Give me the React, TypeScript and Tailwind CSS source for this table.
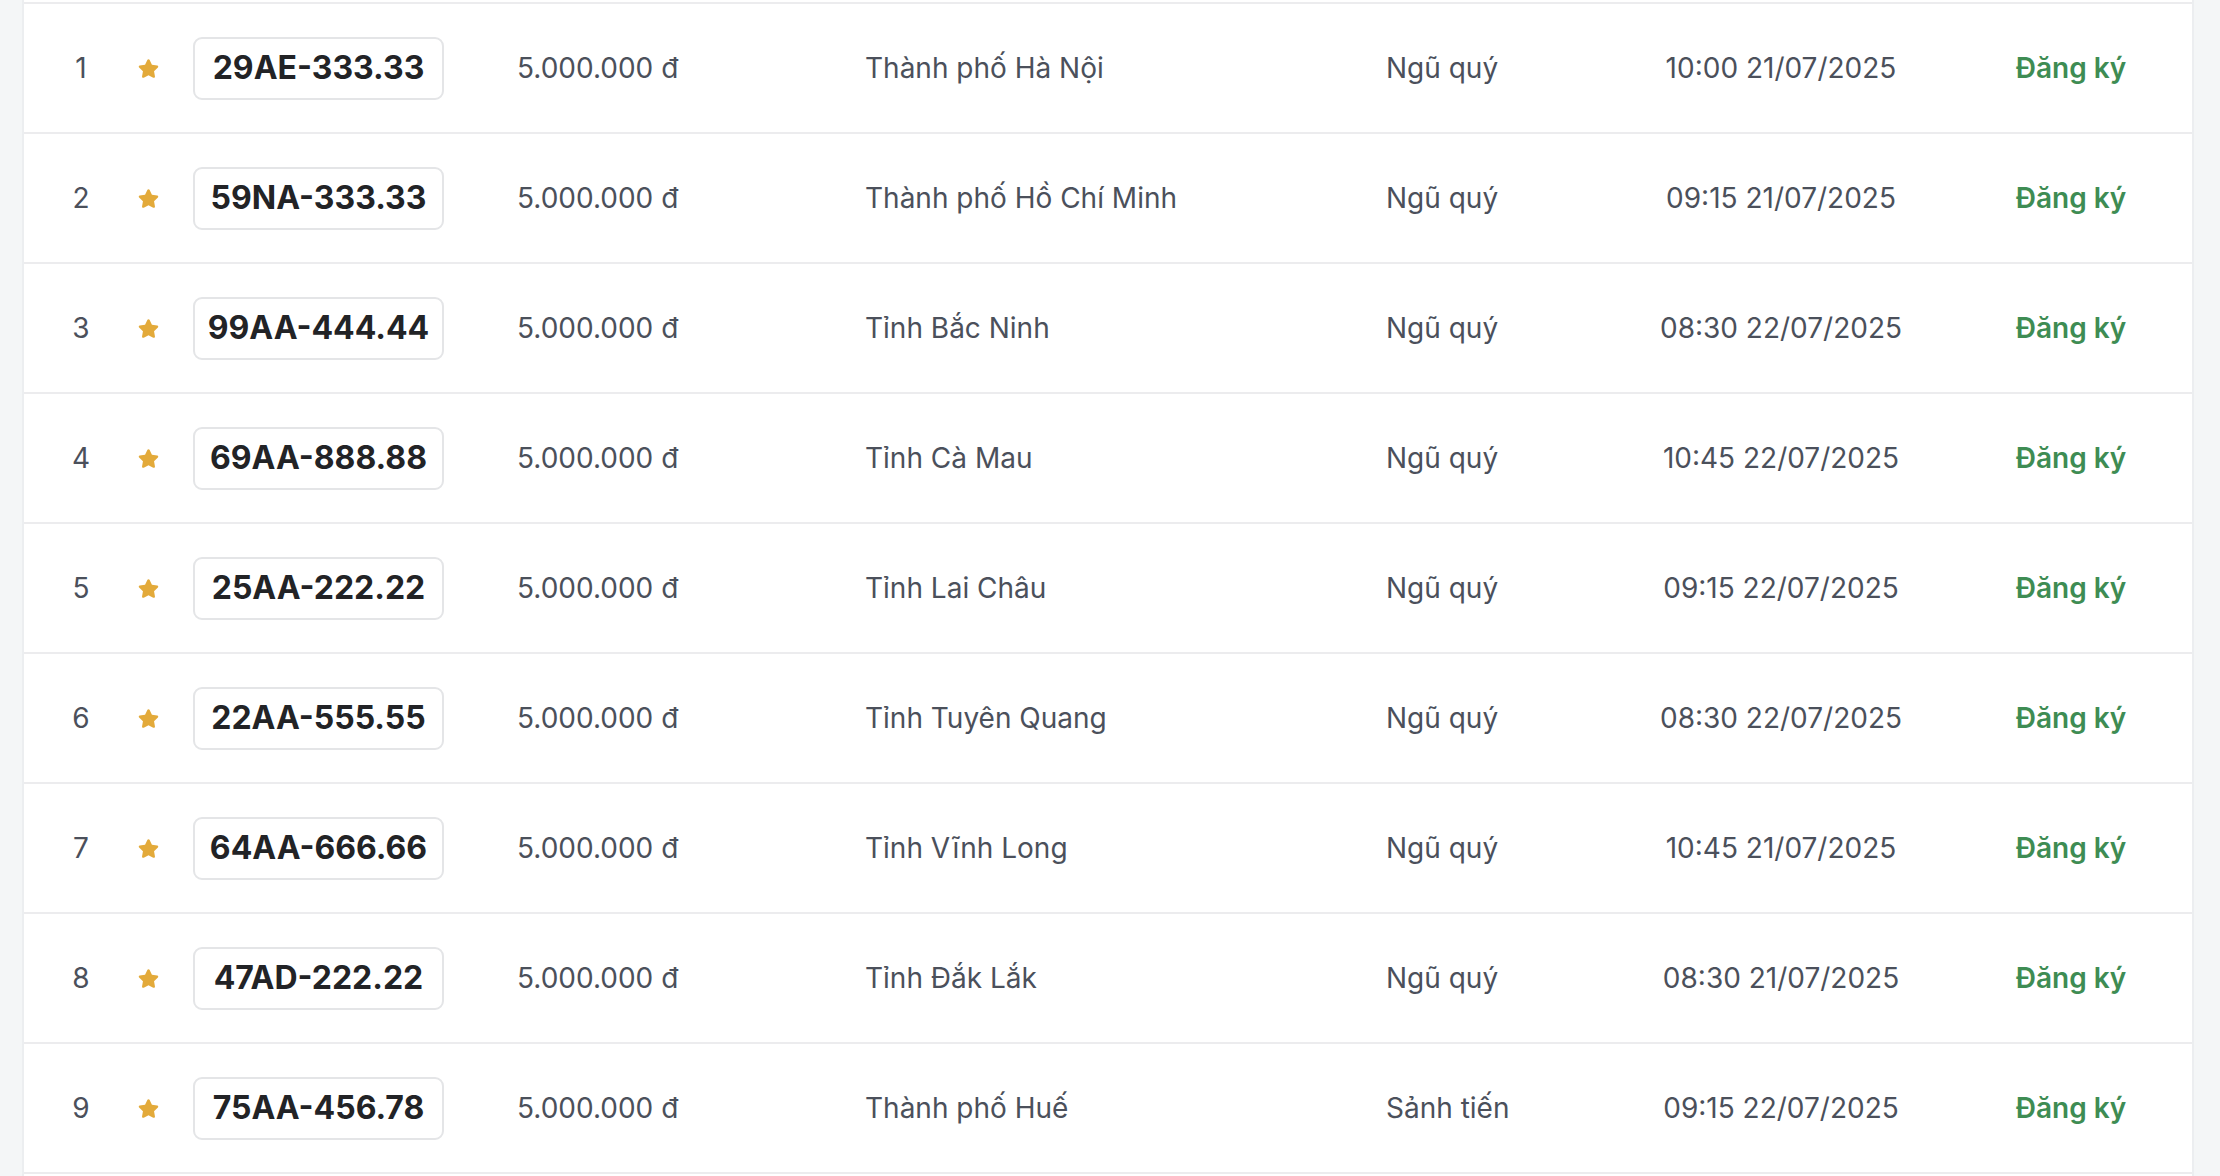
import React from "react";
import { FaStar } from "react-icons/fa";

type Row = {
  plate: string;
  province: string;
  category: string;
  time: string;
};

const rows: Row[] = [
  { plate: "29AE-333.33", province: "Thành phố Hà Nội", category: "Ngũ quý", time: "10:00 21/07/2025" },
  { plate: "59NA-333.33", province: "Thành phố Hồ Chí Minh", category: "Ngũ quý", time: "09:15 21/07/2025" },
  { plate: "99AA-444.44", province: "Tỉnh Bắc Ninh", category: "Ngũ quý", time: "08:30 22/07/2025" },
  { plate: "69AA-888.88", province: "Tỉnh Cà Mau", category: "Ngũ quý", time: "10:45 22/07/2025" },
  { plate: "25AA-222.22", province: "Tỉnh Lai Châu", category: "Ngũ quý", time: "09:15 22/07/2025" },
  { plate: "22AA-555.55", province: "Tỉnh Tuyên Quang", category: "Ngũ quý", time: "08:30 22/07/2025" },
  { plate: "64AA-666.66", province: "Tỉnh Vĩnh Long", category: "Ngũ quý", time: "10:45 21/07/2025" },
  { plate: "47AD-222.22", province: "Tỉnh Đắk Lắk", category: "Ngũ quý", time: "08:30 21/07/2025" },
  { plate: "75AA-456.78", province: "Thành phố Huế", category: "Sảnh tiến", time: "09:15 22/07/2025" },
];

export default function App() {
  return (
    <div
      className="w-full h-[1176px] overflow-hidden bg-[#f4f6f7] pl-[22px] pr-[26px]"
      style={{ fontFamily: "Inter, 'Noto Sans', 'Liberation Sans', sans-serif" }}
    >
      <div className="bg-white border-x-2 border-[#eceef0] pt-[2px] h-full">
        <div className="border-t-2 border-[#ececee]">
          {rows.map((r, i) => (
            <div
              key={i}
              className="flex items-center h-[130px] border-b-2 border-[#ececee] text-[28px] text-[#4b505b]"
            >
              <div className="w-[114px] text-center">{i + 1}</div>
              <div className="w-[20px] flex items-center justify-center">
                <FaStar className="text-[#e3aa3a] w-[21px] h-[21px] shrink-0" />
              </div>
              <div className="ml-[35px] w-[251px] h-[63px] border-2 border-[#e4e5e7] rounded-[9px] flex items-center justify-center">
                <span className="text-[32px] font-bold text-[#222326] tracking-[0px]">
                  {r.plate}
                </span>
              </div>
              <div className="ml-[73px] w-[348px]">5.000.000 đ</div>
              <div className="w-[521px]">{r.province}</div>
              <div className="w-[226px]">{r.category}</div>
              <div className="w-[338px] text-center">{r.time}</div>
              <div className="w-[242px] text-center font-semibold text-[#3e8c53]">Đăng ký</div>
            </div>
          ))}
        </div>
      </div>
    </div>
  );
}
